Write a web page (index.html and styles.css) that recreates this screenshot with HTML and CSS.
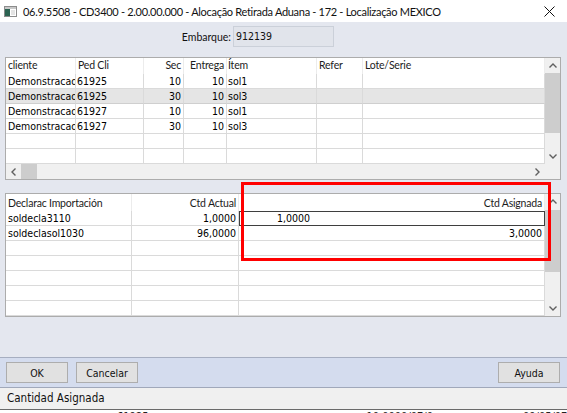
FILE: index.html
```html
<!DOCTYPE html>
<html lang="pt-BR">
<head>
    <meta charset="UTF-8">
    <title>Alocação Retirada Aduana</title>
    <link rel="stylesheet" href="styles.css">
</head>
<body>
<div class="window">
    <div class="titlebar">
        <svg class="app-icon" viewBox="0 0 13 11">
            <rect x="0.5" y="0.5" width="12" height="10" fill="#fff" stroke="#8c8c8c"/>
            <rect x="1" y="1" width="11" height="2" fill="#c9c9c9"/>
            <rect x="1" y="3" width="5" height="7" fill="#2c6352"/>
            <rect x="7" y="4" width="4" height="5" fill="#e4e4e4"/>
        </svg>
        <span class="title">06.9.5508 - CD3400 - 2.00.00.000 - Alocação Retirada Aduana - 172 - Localização MEXICO</span>
        <svg class="close" viewBox="0 0 11 11">
            <path d="M0.5 0.5 L10.5 10.5 M10.5 0.5 L0.5 10.5" stroke="#111" stroke-width="1"/>
        </svg>
    </div>

    <div class="client">
        <div class="embarque">
            <label for="embarque">Embarque:</label>
            <div class="field" id="embarque">912139</div>
        </div>

        <!-- itens do embarque -->
        <div class="grid grid-top">
            <div class="grid-body">
                <div class="row row-top head">
                    <div class="cell">cliente</div>
                    <div class="cell">Ped Cli</div>
                    <div class="cell num">Sec</div>
                    <div class="cell num">Entrega</div>
                    <div class="cell tight">Ítem</div>
                    <div class="cell">Refer</div>
                    <div class="cell">Lote/Serie</div>
                </div>
                <div class="row row-top">
                    <div class="cell">Demonstracao</div>
                    <div class="cell tight">61925</div>
                    <div class="cell num">10</div>
                    <div class="cell num">10</div>
                    <div class="cell tight">sol1</div>
                    <div class="cell"></div>
                    <div class="cell"></div>
                </div>
                <div class="row row-top selected">
                    <div class="cell">Demonstracao</div>
                    <div class="cell tight">61925</div>
                    <div class="cell num">30</div>
                    <div class="cell num">10</div>
                    <div class="cell tight">sol3</div>
                    <div class="cell"></div>
                    <div class="cell"></div>
                </div>
                <div class="row row-top">
                    <div class="cell">Demonstracao</div>
                    <div class="cell tight">61927</div>
                    <div class="cell num">10</div>
                    <div class="cell num">10</div>
                    <div class="cell tight">sol1</div>
                    <div class="cell"></div>
                    <div class="cell"></div>
                </div>
                <div class="row row-top">
                    <div class="cell">Demonstracao</div>
                    <div class="cell tight">61927</div>
                    <div class="cell num">30</div>
                    <div class="cell num">10</div>
                    <div class="cell tight">sol3</div>
                    <div class="cell"></div>
                    <div class="cell"></div>
                </div>
                <div class="row row-top">
                    <div class="cell"></div><div class="cell"></div><div class="cell"></div><div class="cell"></div>
                    <div class="cell"></div><div class="cell"></div><div class="cell"></div>
                </div>
                <div class="row row-top">
                    <div class="cell"></div><div class="cell"></div><div class="cell"></div><div class="cell"></div>
                    <div class="cell"></div><div class="cell"></div><div class="cell"></div>
                </div>
            </div>
            <div class="vscroll vscroll-top">
                <div class="arrow"><svg viewBox="0 0 8 5"><polyline points="0.5,4.5 4,1 7.5,4.5"/></svg></div>
                <div class="thumb"></div>
                <div class="track"></div>
                <div class="arrow"><svg viewBox="0 0 8 5"><polyline points="0.5,0.5 4,4 7.5,0.5"/></svg></div>
            </div>
            <div class="hscroll">
                <div class="arrow"><svg class="side" viewBox="0 0 5 8"><polyline points="4.5,0.5 1,4 4.5,7.5"/></svg></div>
                <div class="hthumb"></div>
                <div class="track"></div>
                <div class="arrow"><svg class="side" viewBox="0 0 5 8"><polyline points="0.5,0.5 4,4 0.5,7.5"/></svg></div>
                <div class="corner"></div>
            </div>
        </div>

        <!-- declaracoes de importacao -->
        <div class="grid grid-bottom">
            <div class="grid-body">
                <div class="row row-bottom head">
                    <div class="cell">Declarac Importación</div>
                    <div class="cell num">Ctd Actual</div>
                    <div class="cell num">Ctd Asignada</div>
                </div>
                <div class="row row-bottom">
                    <div class="cell">soldecla3110</div>
                    <div class="cell num">1,0000</div>
                    <div class="cell editing">1,0000</div>
                </div>
                <div class="row row-bottom">
                    <div class="cell">soldeclasol1030</div>
                    <div class="cell num">96,0000</div>
                    <div class="cell num">3,0000</div>
                </div>
                <div class="row row-bottom"><div class="cell"></div><div class="cell"></div><div class="cell"></div></div>
                <div class="row row-bottom"><div class="cell"></div><div class="cell"></div><div class="cell"></div></div>
                <div class="row row-bottom"><div class="cell"></div><div class="cell"></div><div class="cell"></div></div>
                <div class="row row-bottom"><div class="cell"></div><div class="cell"></div><div class="cell"></div></div>
                <div class="row row-bottom"><div class="cell"></div><div class="cell"></div><div class="cell"></div></div>
            </div>
            <div class="vscroll vscroll-bottom">
                <div class="arrow"><svg viewBox="0 0 8 5"><polyline points="0.5,4.5 4,1 7.5,4.5"/></svg></div>
                <div class="thumb"></div>
                <div class="track"></div>
                <div class="arrow"><svg viewBox="0 0 8 5"><polyline points="0.5,0.5 4,4 7.5,0.5"/></svg></div>
            </div>
        </div>
    </div>

    <div class="buttonbar">
        <button type="button">OK</button>
        <button type="button">Cancelar</button>
        <button type="button" class="help">Ayuda</button>
    </div>

    <div class="statusbar">Cantidad Asignada</div>

    <div class="behind">
        <span class="b1">61925</span>
        <span class="b2">10,0000/07/0</span>
        <span class="b3">09/05/07</span>
    </div>

    <div class="highlight"></div>
</div>
</body>
</html>
```

FILE: styles.css
```css
* {
    box-sizing: border-box;
}
body {
    margin: 0;
    background: #ffffff;
    font-family: 'Lato', 'Liberation Sans', sans-serif;
    color: #000;
}
.window {
    width: 567px;
    height: 413px;
    position: relative;
    overflow: hidden;
}
.titlebar {
    height: 22px;
    display: flex;
    align-items: center;
    padding-left: 4px;
    background: #ffffff;
    font-size: 11px;
    letter-spacing: -0.3px;
    color: #111;
}
.app-icon {
    width: 13px;
    height: 11px;
    margin-right: 6px;
}
.title {
    flex: 1;
    white-space: nowrap;
}
.close {
    width: 11px;
    height: 11px;
    margin-right: 12px;
}
.client {
    background: #e4e7ef;
    height: 335px;
    padding: 4px 6px 0 5px;
}
.embarque {
    display: grid;
    grid-template-columns: 226px 101px;
    column-gap: 2px;
    align-items: center;
    height: 21px;
    margin-bottom: 10px;
}
.embarque label {
    text-align: right;
    font-size: 10.5px;
    color: #111;
}
.field {
    height: 21px;
    border: 1px solid #cbd0d9;
    background: #e1e4eb;
    font-family: 'DejaVu Sans Condensed', 'DejaVu Sans', sans-serif;
    font-stretch: condensed;
    font-size: 10.5px;
    line-height: 19px;
    padding-left: 2px;
    color: #111;
}
.grid {
    width: 556px;
    border: 1px solid #acacac;
    background: #ffffff;
    display: grid;
    grid-template-columns: 539px 15px;
}
.grid-top {
    grid-template-rows: 106px 15px;
}
.grid-bottom {
    margin-top: 13px;
    grid-template-rows: 122px;
}
.row {
    display: grid;
    height: 15px;
    font-family: 'DejaVu Sans Condensed', 'DejaVu Sans', sans-serif;
    font-stretch: condensed;
    font-size: 10.5px;
}
.row-top {
    grid-template-columns: 70px 68px 40px 43px 90px 46px 182px;
}
.row-bottom {
    grid-template-columns: 126px 107px 306px;
}
.row.head {
    font-family: 'Lato', 'Liberation Sans', sans-serif;
    font-stretch: normal;
    font-size: 10.5px;
    letter-spacing: -0.2px;
    color: #1c1c1c;
}
.row-top.head {
    height: 16px;
}
.row-bottom.head {
    height: 17px;
}
.cell {
    border-right: 1px solid #dadada;
    border-bottom: 1px solid #dadada;
    padding: 0 2px;
    line-height: 14px;
    white-space: nowrap;
    overflow: hidden;
}
.head .cell {
    border-bottom: none;
    border-right-color: #ececec;
    line-height: 15px;
}
.row-bottom.head .cell {
    line-height: 18px;
}
.cell.num {
    text-align: right;
}
.cell.tight {
    padding-left: 1px;
}
.selected .cell {
    background: #e5e5e5;
    border-bottom-color: #cfcfcf;
}
.cell.editing {
    border: 1px solid #3f3f3f;
    padding-left: 37px;
    line-height: 12px;
}
.vscroll {
    display: flex;
    flex-direction: column;
    background: #f0f0f0;
}
.arrow {
    width: 15px;
    height: 15px;
    display: flex;
    align-items: center;
    justify-content: center;
    flex: none;
}
.arrow svg {
    width: 8px;
    height: 5px;
}
.arrow svg.side {
    width: 5px;
    height: 8px;
}
.arrow polyline {
    fill: none;
    stroke: #606060;
    stroke-width: 1.4;
}
.thumb {
    width: 15px;
    background: #cdcdcd;
    flex: none;
}
.vscroll-top .thumb {
    height: 60px;
}
.vscroll-bottom .thumb {
    height: 62px;
    margin-top: 1px;
}
.track {
    flex: 1;
}
.hscroll {
    grid-column: 1 / 3;
    display: flex;
    background: #f0f0f0;
}
.hthumb {
    width: 16px;
    background: #cdcdcd;
}
.corner {
    width: 15px;
}
.buttonbar {
    height: 31px;
    background: #d4dcee;
    border-top: 1px solid #a6aec0;
    border-bottom: 1px solid #a0a8ba;
    display: flex;
    align-items: center;
    gap: 8px;
    padding: 0 7px 0 6px;
}
button {
    width: 62px;
    height: 21px;
    background: #e1e1e1;
    border: 1px solid #adadad;
    font-family: 'DejaVu Sans Condensed', 'DejaVu Sans', sans-serif;
    font-stretch: condensed;
    font-size: 10.5px;
    color: #111;
    padding: 0;
}
button.help {
    margin-left: auto;
}
.statusbar {
    height: 21px;
    background: #f0f0f0;
    padding-left: 7px;
    font-family: 'DejaVu Sans Condensed', 'DejaVu Sans', sans-serif;
    font-stretch: condensed;
    font-size: 11.5px;
    line-height: 21px;
    color: #111;
}
.behind {
    height: 5px;
    border-top: 1px solid #6a6a6a;
    background: #ffffff;
    display: flex;
    font-family: 'DejaVu Sans Condensed', 'DejaVu Sans', sans-serif;
    font-size: 11px;
    line-height: 12px;
    overflow: hidden;
    color: #222;
}
.behind span {
    margin-top: 1px;
}
.b1 {
    margin-left: 117px;
}
.b2 {
    margin-left: 218px;
}
.b3 {
    margin-left: 90px;
}
.highlight {
    position: absolute;
    left: 241px;
    top: 182px;
    width: 310px;
    height: 79px;
    border: 3px solid #ff0000;
}
```
